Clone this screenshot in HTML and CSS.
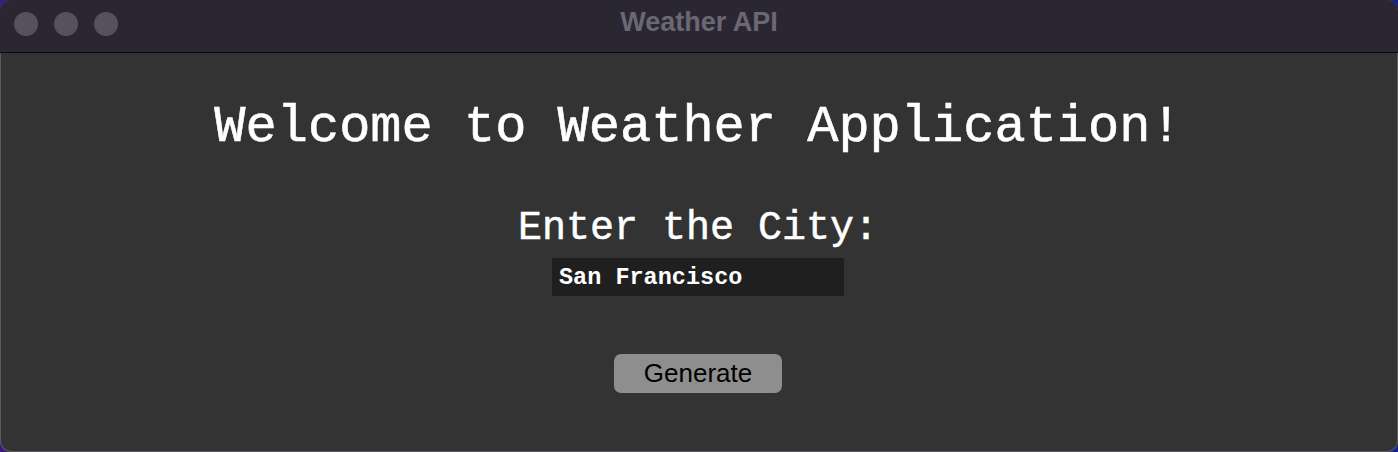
FILE: index.html
```html
<!DOCTYPE html>
<html lang="en">
<head>
<meta charset="utf-8">
<title>Weather API</title>
<link rel="stylesheet" href="styles.css">
</head>
<body>
<div class="window">
  <header class="titlebar">
    <div class="lights">
      <span class="light"></span>
      <span class="light"></span>
      <span class="light"></span>
    </div>
    <div class="title">Weather API</div>
  </header>
  <main class="content">
    <h1 class="welcome">Welcome to Weather Application!</h1>
    <label class="prompt" for="city">Enter the City:</label>
    <input id="city" class="city" type="text" value="San Francisco">
    <button class="generate" type="button">Generate</button>
  </main>
</div>
</body>
</html>
```
FILE: styles.css
```css
* { box-sizing: border-box; }
html, body {
  margin: 0;
  padding: 0;
  width: 1398px;
  height: 452px;
  overflow: hidden;
  background: linear-gradient(90deg, #3b1a86 0%, #221c7a 50%, #1c1f9a 100%);
}
.window {
  width: 1398px;
  height: 452px;
  border-radius: 11px;
  overflow: hidden;
  background: #333333;
  box-shadow: inset 0 0 0 1px #5a5a5e;
  display: flex;
  flex-direction: column;
}
.titlebar {
  position: relative;
  height: 53px;
  flex: 0 0 53px;
  background: #2a2733;
  border-bottom: 1px solid #0a0a0a;
  display: flex;
  align-items: center;
  justify-content: center;
}
.lights {
  position: absolute;
  left: 14px;
  top: 12px;
  display: flex;
  gap: 16px;
}
.light {
  width: 24px;
  height: 24px;
  border-radius: 50%;
  background: #55525d;
}
.title {
  font-family: "Liberation Sans", Arial, sans-serif;
  font-weight: bold;
  font-size: 27px;
  color: #6b6873;
  margin-top: -7px;
}
.content {
  flex: 1;
  display: flex;
  flex-direction: column;
  align-items: center;
  padding: 45px 2px 0 0;
}
.welcome {
  margin: 0;
  font-family: "Liberation Mono", "Courier New", monospace;
  font-weight: normal;
  font-size: 52px;
  line-height: 60px;
  color: #ffffff;
  -webkit-text-stroke: 0.6px #ffffff;
}
.prompt {
  margin-top: 47px;
  font-family: "Liberation Mono", "Courier New", monospace;
  font-size: 40px;
  line-height: 48px;
  color: #ffffff;
  -webkit-text-stroke: 0.5px #ffffff;
}
.city {
  margin-top: 5px;
  width: 292px;
  height: 38px;
  border: none;
  outline: none;
  background: #1f1f1f;
  color: #ffffff;
  font-family: "Liberation Mono", "Courier New", monospace;
  font-weight: bold;
  font-size: 23.5px;
  padding: 0 0 0 7px;
}
.generate {
  margin-top: 58px;
  width: 168px;
  height: 39px;
  border: none;
  border-radius: 7px;
  background: #8e8e8e;
  color: #000000;
  font-family: "Liberation Sans", Arial, sans-serif;
  font-size: 26px;
  padding: 0;
}
```
